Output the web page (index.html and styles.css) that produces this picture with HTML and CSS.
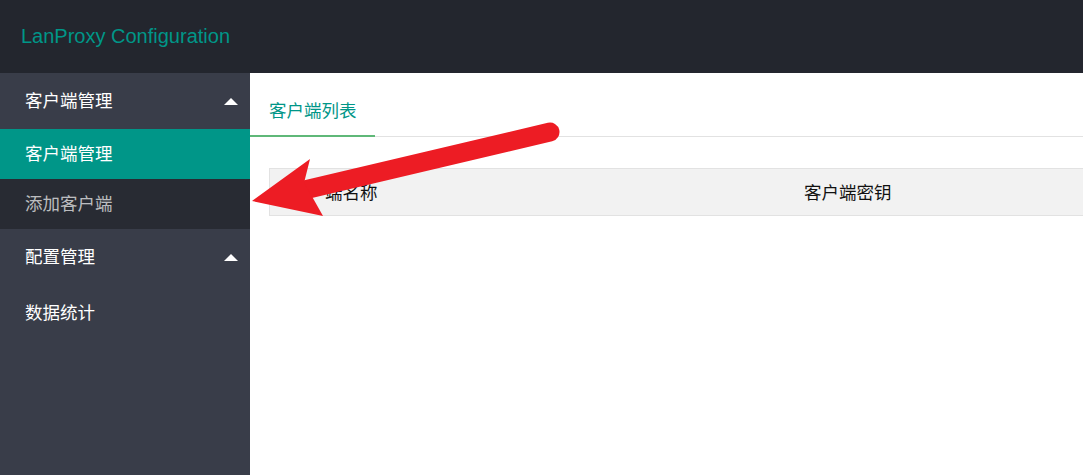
FILE: index.html
```html
<html>
<head>
<title>LanProxy Configuration</title>
<link rel="stylesheet" href="styles.css">
</head>
<body>
<div class="header">
  <div class="logo">LanProxy Configuration</div>
</div>

<div class="layout">

  <div class="side">
    <div class="nav-item open">
      <a class="nav-title">客户端管理<span class="more"></span></a>
      <div class="nav-child">
        <a class="this">客户端管理</a>
        <a>添加客户端</a>
      </div>
    </div>
    <div class="nav-item">
      <a class="nav-title">配置管理<span class="more"></span></a>
    </div>
    <div class="nav-item">
      <a class="nav-title">数据统计</a>
    </div>
  </div>

  <div class="body">
    <ul class="tab-title">
      <li class="this">客户端列表</li>
    </ul>
    <div class="tab-content">
      <table class="table">
        <thead>
          <tr>
            <th class="col-name">客户端名称</th>
            <th>客户端密钥</th>
          </tr>
        </thead>
      </table>
    </div>
  </div>

</div>

<!-- annotation arrow drawn over the page -->
<svg class="arrow" width="1083" height="475" viewBox="0 0 1083 475">
  <line x1="550" y1="132" x2="296" y2="192" stroke="#ed1c24" stroke-width="19" stroke-linecap="round" />
  <polygon points="252,201 310,159 304,183 314,200 323,216" fill="#ed1c24" />
</svg>
</body>
</html>
```

FILE: styles.css
```css
html, body {
  margin: 0;
  padding: 0;
  height: 100%;
  overflow: hidden;
}

body {
  font-family: "Liberation Sans", "Noto Sans CJK SC", sans-serif;
  font-size: 17.5px;
  color: #222;
  background: #fff;
}

.header {
  height: 73px;
  background-color: #23262E;
  display: flex;
  align-items: center;
  padding-left: 21px;
}

.logo {
  color: #009688;
  font-size: 20px;
}

.layout {
  display: flex;
  height: calc(100% - 73px);
}

.side {
  width: 250px;
  flex-shrink: 0;
  background-color: #393D49;
}

.nav-item a {
  display: flex;
  align-items: center;
  box-sizing: border-box;
  padding: 0 0 3px 25px;
  font-family: "Noto Sans CJK SC", sans-serif;
  color: #fff;
  text-decoration: none;
}

.nav-title {
  height: 56px;
  position: relative;
}

.more {
  position: absolute;
  right: 12px;
  top: 25px;
  width: 0;
  height: 0;
  border-left: 7px solid transparent;
  border-right: 7px solid transparent;
  border-bottom: 7px solid #fff;
}

.nav-child {
  background-color: #282B33;
}

.nav-child a {
  height: 50px;
  color: rgba(255,255,255,.7);
}

.nav-child a.this {
  background-color: #009688;
  color: #fff;
}

.body {
  flex: 1;
  padding-top: 13px;
  overflow: hidden;
}

.tab-title {
  list-style: none;
  margin: 0;
  padding: 0;
  height: 50px;
  border-bottom: 1px solid #e2e2e2;
  display: flex;
}

.tab-title li {
  position: relative;
  height: 50px;
  line-height: 48px;
  padding: 0 18px 0 19px;
  font-family: "Noto Sans CJK SC", sans-serif;
  color: #009688;
}

.tab-title li.this:after {
  content: "";
  position: absolute;
  left: 0;
  right: 0;
  bottom: -1px;
  height: 2px;
  background-color: #5FB878;
}

.tab-content {
  padding: 31px 0 0 19px;
}

.table {
  width: 1100px;
  border-collapse: collapse;
  font-family: "Noto Sans CJK SC", sans-serif;
}

.table th {
  height: 47px;
  padding: 0 20px 2px 20px;
  text-align: left;
  font-weight: normal;
  font-size: 17.5px;
  color: #111;
  background-color: #f2f2f2;
  border: 1px solid #e2e2e2;
  border-right: none;
}

.table th + th {
  border-left: none;
}

.table .col-name {
  width: 474px;
}

.arrow {
  position: absolute;
  left: 0;
  top: 0;
  pointer-events: none;
}
```
